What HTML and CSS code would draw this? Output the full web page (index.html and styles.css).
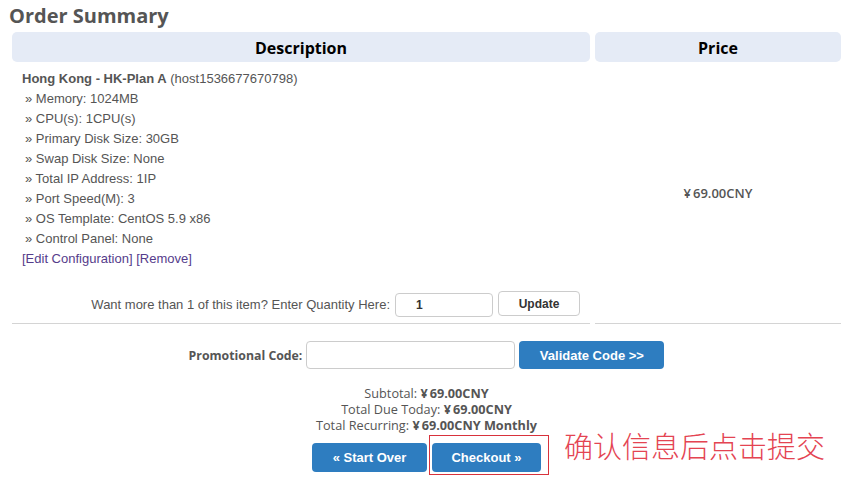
FILE: index.html
```html
<!DOCTYPE html>
<html>
<head>
<meta charset="utf-8">
<link rel="stylesheet" href="styles.css">
</head>
<body>
<h1 class="title">Order Summary</h1>
<div class="cart">
  <div class="th">Description</div>
  <div class="th">Price</div>
  <div class="desc">
    <div class="line"><b>Hong Kong - HK-Plan A</b> (host1536677670798)</div>
    <div class="line opt">» Memory: 1024MB</div>
    <div class="line opt">» CPU(s): 1CPU(s)</div>
    <div class="line opt">» Primary Disk Size: 30GB</div>
    <div class="line opt">» Swap Disk Size: None</div>
    <div class="line opt">» Total IP Address: 1IP</div>
    <div class="line opt">» Port Speed(M): 3</div>
    <div class="line opt">» OS Template: CentOS 5.9 x86</div>
    <div class="line opt">» Control Panel: None</div>
    <div class="line"><a href="#" class="lnk">[Edit Configuration]</a> <a href="#" class="lnk">[Remove]</a></div>
    <div class="qty">
      <span>Want more than 1 of this item? Enter Quantity Here:</span>
      <input class="qty-input" type="text" value="1">
      <button class="btn-update">Update</button>
    </div>
  </div>
  <div class="price"><span class="yen">¥</span>69.00CNY</div>
</div>
<div class="promo">
  <span class="promo-label">Promotional Code:</span>
  <input class="promo-input" type="text">
  <button class="btn-blue btn-validate">Validate Code &gt;&gt;</button>
</div>
<div class="totals">
  <div>Subtotal: <b><span class="yen">¥</span>69.00CNY</b></div>
  <div>Total Due Today: <b><span class="yen">¥</span>69.00CNY</b></div>
  <div>Total Recurring: <b><span class="yen">¥</span>69.00CNY Monthly</b></div>
</div>
<div class="actions">
  <button class="btn-blue btn-act">« Start Over</button>
  <button class="btn-blue btn-act btn-checkout">Checkout »</button>
  <div class="mark"></div>
  <div class="note">确认信息后点击提交</div>
</div>
</body>
</html>
```
FILE: styles.css
```css
html, body {
  margin: 0;
  padding: 0;
  background: #fff;
}
body {
  width: 847px;
  height: 482px;
  overflow: hidden;
  font-family: "Liberation Sans", Arial, sans-serif;
  color: #555;
}
.title {
  margin: 0;
  padding: 2px 0 0 9px;
  font-family: "Open Sans", sans-serif;
  font-weight: 700;
  font-size: 20px;
  line-height: 28px;
  color: #555;
}
.cart {
  display: grid;
  grid-template-columns: 578px 246px;
  column-gap: 5px;
  margin: 2px 0 0 12px;
}
.th {
  background: #e5ebf6;
  border-radius: 5px;
  height: 30px;
  line-height: 32px;
  text-align: center;
  font-family: "Open Sans", sans-serif;
  font-weight: 700;
  font-size: 16px;
  color: #000;
}
.desc {
  padding: 7px 10px 6px 10px;
  border-bottom: 1px solid #d4d4d4;
  font-size: 13px;
}
.line {
  line-height: 20px;
  height: 20px;
  white-space: nowrap;
}
.opt {
  padding-left: 3px;
}
.lnk {
  color: #553c8b;
  text-decoration: none;
}
.qty {
  display: flex;
  justify-content: flex-end;
  align-items: flex-start;
  gap: 5px;
  margin-top: 22px;
}
.qty span {
  line-height: 24px;
  margin-top: 2px;
}
.qty-input {
  width: 98px;
  height: 24px;
  box-sizing: border-box;
  margin: 2px 0 0 0;
  border: 1px solid #ccc;
  border-radius: 4px;
  padding: 0 0 0 20px;
  font-family: "Liberation Sans", Arial, sans-serif;
  font-weight: 700;
  font-size: 12px;
  color: #333;
}
.btn-update {
  width: 82px;
  height: 25px;
  box-sizing: border-box;
  margin: 0;
  border: 1px solid #ccc;
  border-radius: 4px;
  background: #fff;
  font-family: "Liberation Sans", Arial, sans-serif;
  font-weight: 700;
  font-size: 12px;
  color: #333;
}
.price {
  border-bottom: 1px solid #d4d4d4;
  display: flex;
  align-items: center;
  justify-content: center;
  font-family: "Open Sans", sans-serif;
  font-weight: 600;
  font-size: 13px;
  color: #555;
}
.yen {
  margin-right: 2px;
}
.promo {
  display: flex;
  justify-content: center;
  align-items: center;
  gap: 4px;
  margin: 17px 0 0 12px;
  width: 829px;
}
.promo-label {
  font-family: "Open Sans", sans-serif;
  font-weight: 700;
  font-size: 12.3px;
  color: #555;
}
.promo-input {
  width: 209px;
  height: 28px;
  box-sizing: border-box;
  margin: 0;
  border: 1px solid #ccc;
  border-radius: 4px;
}
.btn-blue {
  background: #2e7dc0;
  color: #fff;
  border: none;
  border-radius: 4px;
  font-family: "Liberation Sans", Arial, sans-serif;
  font-weight: 700;
  font-size: 13px;
  margin: 0;
  padding: 0;
}
.btn-validate {
  width: 145px;
  height: 28px;
}
.totals {
  margin: 16px 0 0 12px;
  width: 829px;
  text-align: center;
  font-family: "Open Sans", sans-serif;
  font-size: 12.7px;
  line-height: 16px;
  color: #555;
}
.actions {
  position: relative;
  display: flex;
  justify-content: center;
  gap: 5px;
  margin: 10px 0 0 12px;
  width: 829px;
}
.btn-act {
  width: 115px;
  height: 29px;
}
.btn-checkout {
  width: 109px;
}
.mark {
  position: absolute;
  left: 417px;
  top: -8px;
  width: 118px;
  height: 38px;
  border: 1px solid #d8323c;
}
.note {
  position: absolute;
  left: 552px;
  top: -17px;
  font-family: "Noto Sans CJK SC", sans-serif;
  font-weight: 300;
  font-size: 29px;
  line-height: 38px;
  color: #e44452;
  white-space: nowrap;
}
```
